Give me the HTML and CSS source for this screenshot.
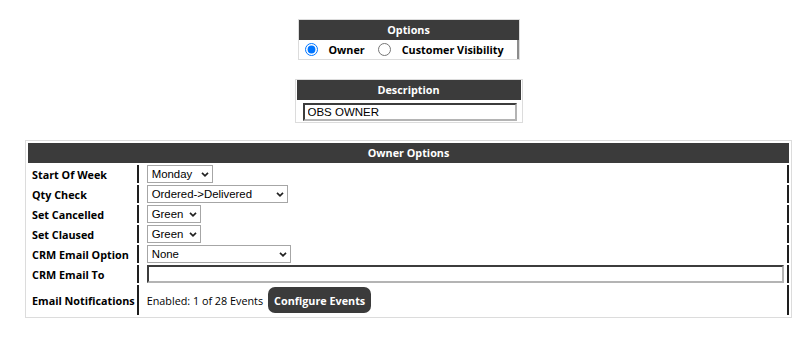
FILE: index.html
```html
<!DOCTYPE html>
<html>
<head>
<meta charset="utf-8">
<title>Owner Options</title>
<link rel="stylesheet" href="styles.css">
</head>
<body>
<div class="page">
  <table class="box options">
    <tr><th class="head">Options</th></tr>
    <tr>
      <td class="radios">
        <div class="radio-row">
          <input type="radio" name="mode" class="radio" checked>
          <span class="radio-label first">Owner</span>
          <input type="radio" name="mode" class="radio">
          <span class="radio-label">Customer Visibility</span>
        </div>
      </td>
    </tr>
  </table>

  <table class="box desc">
    <tr><th class="head">Description</th></tr>
    <tr><td class="desc-cell"><input class="text desc-input" value="OBS OWNER"></td></tr>
  </table>

  <table class="box owner">
    <tr><th class="head" colspan="2">Owner Options</th></tr>
    <tr>
      <td class="lbl">Start Of Week</td>
      <td class="val"><div class="sel w-monday"><span>Monday</span><svg class="chev" width="8" height="5" viewBox="0 0 8 5"><path d="M1 0.8 L4 3.8 L7 0.8" fill="none" stroke="#222" stroke-width="1.7"/></svg></div></td>
    </tr>
    <tr>
      <td class="lbl">Qty Check</td>
      <td class="val"><div class="sel w-qty"><span>Ordered-&gt;Delivered</span><svg class="chev" width="8" height="5" viewBox="0 0 8 5"><path d="M1 0.8 L4 3.8 L7 0.8" fill="none" stroke="#222" stroke-width="1.7"/></svg></div></td>
    </tr>
    <tr>
      <td class="lbl">Set Cancelled</td>
      <td class="val"><div class="sel w-green"><span>Green</span><svg class="chev" width="8" height="5" viewBox="0 0 8 5"><path d="M1 0.8 L4 3.8 L7 0.8" fill="none" stroke="#222" stroke-width="1.7"/></svg></div></td>
    </tr>
    <tr>
      <td class="lbl">Set Claused</td>
      <td class="val"><div class="sel w-green"><span>Green</span><svg class="chev" width="8" height="5" viewBox="0 0 8 5"><path d="M1 0.8 L4 3.8 L7 0.8" fill="none" stroke="#222" stroke-width="1.7"/></svg></div></td>
    </tr>
    <tr>
      <td class="lbl">CRM Email Option</td>
      <td class="val"><div class="sel w-none"><span>None</span><svg class="chev" width="8" height="5" viewBox="0 0 8 5"><path d="M1 0.8 L4 3.8 L7 0.8" fill="none" stroke="#222" stroke-width="1.7"/></svg></div></td>
    </tr>
    <tr>
      <td class="lbl">CRM Email To</td>
      <td class="val"><input class="text email-input" value=""></td>
    </tr>
    <tr class="tall">
      <td class="lbl">Email Notifications</td>
      <td class="val"><div class="notif"><span>Enabled: 1 of 28 Events</span><button class="btn">Configure Events</button></div></td>
    </tr>
  </table>
</div>
</body>
</html>
```

FILE: styles.css
```css
* {
  box-sizing: border-box;
}

body {
  margin: 0;
  background: #ffffff;
  color: #000000;
  font-family: "Open Sans", "Noto Sans", sans-serif;
  font-size: 10.8px;
}

.page {
  width: 767px;
  margin-left: 25px;
  padding-top: 19px;
}

table {
  border-collapse: separate;
}

.box {
  border: 1px solid #dcdcdc;
  margin: 0 auto;
}

.head {
  background: #3b3b3b;
  color: #ffffff;
  font-weight: 700;
  text-align: center;
  height: 20px;
  padding: 0;
  line-height: 20px;
}

/* Options */
.options {
  width: 222px;
  border-spacing: 0;
}

.radios {
  height: 19px;
  padding: 0 0 0 6px;
  border-right: 2px solid #8c8c8c;
}

.radio-row {
  display: flex;
  align-items: center;
  font-weight: 700;
}

.radio {
  width: 13px;
  height: 13px;
  margin: 0;
  accent-color: #0075ff;
}

.radio-label {
  margin-left: 11px;
}

.radio-label.first {
  margin-right: 13px;
}

/* Description */
.desc {
  width: 228px;
  margin-top: 19px;
  border-spacing: 1px 0;
}

.desc-cell {
  padding: 3px 4px 1px 6px;
}

.text {
  display: block;
  height: 18px;
  margin: 0;
  padding: 0 3px;
  font-family: "Liberation Sans", Arial, sans-serif;
  font-size: 11.5px;
  color: #000;
  background: #fff;
  border-style: solid;
  border-width: 2px;
  border-color: #3c3c3c #b4b4b4 #b4b4b4 #3c3c3c;
  outline: none;
}

.desc-input {
  width: 214px;
}

/* Owner options */
.owner {
  width: 767px;
  margin-top: 17px;
  border-spacing: 2px;
}

.lbl {
  width: 108px;
  height: 18px;
  padding: 0 2px 0 4px;
  font-weight: 700;
  white-space: nowrap;
  border-right: 2px solid #1e1e1e;
  vertical-align: middle;
}

.val {
  height: 18px;
  padding: 0 2px 0 6px;
  border-right: 2px solid #1e1e1e;
  vertical-align: middle;
}

.tall .lbl,
.tall .val {
  height: 30px;
}

.sel {
  display: flex;
  align-items: center;
  justify-content: space-between;
  height: 18px;
  padding: 0 3px 0 4px;
  border: 1px solid #a6a6a6;
  background: #fff;
  font-family: "Liberation Sans", Arial, sans-serif;
  font-size: 11.4px;
  color: #000;
}

.chev {
  display: block;
  flex: none;
}

.w-monday { width: 66px; }
.w-qty { width: 141px; }
.w-green { width: 54px; }
.w-none { width: 144px; }

.email-input {
  width: 637px;
}

.notif {
  display: flex;
  align-items: center;
  gap: 5px;
}

.btn {
  height: 26px;
  padding: 0 6px;
  border: none;
  border-radius: 7px;
  background: #3b3b3b;
  color: #fff;
  font-family: "Open Sans", "Noto Sans", sans-serif;
  font-size: 10.8px;
  font-weight: 700;
}
```
